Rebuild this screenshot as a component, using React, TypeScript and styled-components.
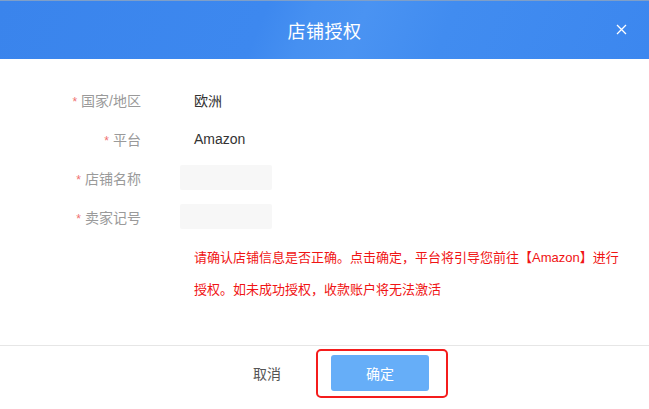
import React from "react";
import styled, { createGlobalStyle } from "styled-components";

const GlobalStyle = createGlobalStyle`
  html, body {
    margin: 0;
    padding: 0;
    background: #fff;
  }
  body {
    font-family: "Liberation Sans", "Noto Sans CJK SC", sans-serif;
  }
`;

const Dialog = styled.div`
  width: 649px;
  height: 409px;
  display: flex;
  flex-direction: column;
  background: #fff;
  overflow: hidden;
`;

const Header = styled.div`
  height: 59px;
  flex-shrink: 0;
  display: flex;
  align-items: center;
  justify-content: center;
  position: relative;
  border-top: 1px solid #7f9fc8;
  box-sizing: border-box;
  background: linear-gradient(
    112deg,
    #3a84ec 0%,
    #3d88ef 40%,
    #4690f1 47%,
    #4a93f2 55%,
    #418cf0 68%,
    #3c87ef 100%
  );
`;

const Title = styled.h2`
  margin: 0;
  font-size: 18px;
  font-weight: normal;
  color: #fff;
  letter-spacing: 0.5px;
`;

const CloseButton = styled.button`
  position: absolute;
  right: 20px;
  top: 20px;
  width: 16px;
  height: 16px;
  padding: 0;
  border: none;
  background: none;
  cursor: pointer;
  display: flex;
  align-items: center;
  justify-content: center;
`;

const Body = styled.div`
  flex: 1;
  padding-top: 21px;
`;

const FormRow = styled.div`
  display: grid;
  grid-template-columns: 141px 1fr;
  column-gap: 39px;
  align-items: center;
  height: 39px;
`;

const Label = styled.div`
  text-align: right;
  font-size: 14px;
  color: #9a9a9a;
  white-space: nowrap;
`;

const Star = styled.span`
  color: #f07070;
  margin-right: 4px;
  font-size: 12px;
`;

const Value = styled.div`
  padding-left: 14px;
  font-size: 14px;
  color: #333;
`;

const EmptyInput = styled.div`
  width: 92px;
  height: 25px;
  background: #f7f7f7;
  border-radius: 2px;
`;

const Notice = styled.p`
  margin: 6px 0 0 194px;
  width: 430px;
  font-size: 13px;
  line-height: 32px;
  color: #f01414;
`;

const Footer = styled.div`
  height: 64px;
  flex-shrink: 0;
  border-top: 1px solid #e6e6e6;
  display: flex;
  align-items: flex-start;
  padding: 3px 0 0 241px;
  gap: 23px;
  box-sizing: border-box;
`;

const CancelButton = styled.button`
  width: 52px;
  height: 48px;
  border: none;
  background: none;
  font-family: inherit;
  font-size: 14px;
  color: #555;
  cursor: pointer;
`;

const Highlight = styled.div`
  border: 2px solid #f41c1c;
  border-radius: 5px;
  padding: 4px 17px 5px 13px;
  display: flex;
`;

const ConfirmButton = styled.button`
  width: 98px;
  height: 36px;
  border: none;
  border-radius: 3px;
  background: #66aef8;
  color: #fff;
  font-family: inherit;
  font-size: 14px;
  cursor: pointer;
`;

const rows = [
  { label: "国家/地区", value: "欧洲" },
  { label: "平台", value: "Amazon" },
  { label: "店铺名称", value: null },
  { label: "卖家记号", value: null },
];

const App = () => {
  return (
    <Dialog>
      <GlobalStyle />
      <Header>
        <Title>店铺授权</Title>
        <CloseButton aria-label="关闭">
          <svg width="11" height="11" viewBox="0 0 11 11">
            <path d="M1 1 L10 10 M10 1 L1 10" stroke="#fff" strokeWidth="1.3" />
          </svg>
        </CloseButton>
      </Header>
      <Body>
        {rows.map((row) => (
          <FormRow key={row.label}>
            <Label>
              <Star>*</Star>
              {row.label}
            </Label>
            {row.value ? <Value>{row.value}</Value> : <EmptyInput />}
          </FormRow>
        ))}
        <Notice>
          请确认店铺信息是否正确。点击确定，平台将引导您前往【Amazon】进行授权。如未成功授权，收款账户将无法激活
        </Notice>
      </Body>
      <Footer>
        <CancelButton>取消</CancelButton>
        <Highlight>
          <ConfirmButton>确定</ConfirmButton>
        </Highlight>
      </Footer>
    </Dialog>
  );
};

export default App;
